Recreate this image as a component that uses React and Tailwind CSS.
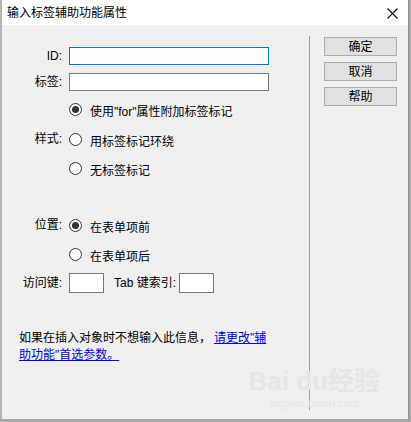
import React from 'react';

const font = { fontFamily: '"Liberation Sans", "Noto Sans CJK SC", sans-serif' };

const Radio = ({ checked }) => (
  <span className="relative flex h-[13px] w-[13px] shrink-0 items-center justify-center rounded-full border border-[#333] bg-white">
    {checked && <span className="h-[7px] w-[7px] rounded-full bg-[#333]" />}
  </span>
);

const RadioRow = ({ checked, label, className = '' }) => (
  <div className={`flex h-[20px] items-center ${className}`}>
    <Radio checked={checked} />
    <span className="ml-[8px] mt-[6px] whitespace-nowrap">{label}</span>
  </div>
);

const Label = ({ children }) => (
  <div className="w-[60px] shrink-0 text-right whitespace-nowrap">{children}</div>
);

const Button = ({ children, className = '' }) => (
  <button className={`h-[19px] w-[73px] border border-[#adadad] bg-[#e1e1e1] text-[12px] leading-none text-black ${className}`}>
    {children}
  </button>
);

export default function App() {
  return (
    <div className="h-[422px] w-[411px] overflow-hidden bg-[#a9a9a9] text-[12px] text-black" style={font}>
      <div className="relative flex h-[419px] w-[409px] flex-col border-l-2 border-r border-l-[#b5b5b5] border-r-[#8c8c8c] bg-[#f0f0f0]">
        {/* Title bar */}
        <div className="flex h-[25px] shrink-0 items-center justify-between bg-white pl-[5px] pr-[10px]">
          <span className="text-[12px]">输入标签辅助功能属性</span>
          <svg width="11" height="11" viewBox="0 0 11 11" className="mt-[1px]">
            <path d="M0.5 0.5 L10.5 10.5 M10.5 0.5 L0.5 10.5" stroke="#111" strokeWidth="1.1" />
          </svg>
        </div>

        {/* Body */}
        <div className="flex flex-1">
          {/* Left column */}
          <div className="flex w-[307px] flex-col pt-[22px]">
            <div className="flex h-[18px] items-center">
              <Label>ID:</Label>
              <div className="ml-[7px] h-[18px] w-[200px] border border-[#0078d7] bg-white" />
            </div>
            <div className="mt-[8px] flex h-[18px] items-center">
              <Label>标签:</Label>
              <div className="ml-[7px] h-[18px] w-[200px] border border-[#7a7a7a] bg-white" />
            </div>

            <div className="mt-[8px] flex items-center">
              <Label>样式:</Label>
              <div className="ml-[7px] flex flex-col">
                <RadioRow checked label={'使用"for"属性附加标签标记'} />
                <RadioRow label="用标签标记环绕" className="mt-[10px]" />
                <RadioRow label="无标签标记" className="mt-[9px]" />
              </div>
            </div>

            <div className="mt-[37px] flex">
              <Label>
                <div className="flex h-[20px] items-center justify-end">位置:</div>
              </Label>
              <div className="ml-[7px] flex flex-col">
                <RadioRow checked label="在表单项前" />
                <RadioRow label="在表单项后" className="mt-[9px]" />
              </div>
            </div>

            <div className="mt-[9px] flex h-[20px] items-center">
              <Label>访问键:</Label>
              <div className="ml-[7px] h-[20px] w-[35px] border border-[#7a7a7a] bg-white" />
              <span className="ml-[10px] whitespace-nowrap">Tab 键索引:</span>
              <div className="ml-[3px] h-[20px] w-[35px] border border-[#7a7a7a] bg-white" />
            </div>

            <p className="mt-[37px] pl-[17px] leading-[17px]">
              如果在插入对象时不想输入此信息，
              <a href="#" className="ml-[3px] text-[#0000ee] underline">
                请更改"辅
                <br />
                助功能"首选参数。
              </a>
            </p>
          </div>

          {/* Separator */}
          <div className="mb-[9px] mt-[11px] w-px bg-[#a0a0a0]" />

          {/* Right column */}
          <div className="flex flex-col gap-[6px] pl-[14px] pt-[12px]">
            <Button>确定</Button>
            <Button>取消</Button>
            <Button>帮助</Button>
          </div>
        </div>

        {/* Watermark */}
        <div className="pointer-events-none absolute bottom-[10px] right-[28px] flex flex-col items-center text-[#e6e6e6]">
          <span className="text-[26px] font-bold leading-none">Bai du经验</span>
          <span className="mt-[4px] text-[11px] leading-none">jingyan.baidu.com</span>
        </div>
      </div>
    </div>
  );
}
